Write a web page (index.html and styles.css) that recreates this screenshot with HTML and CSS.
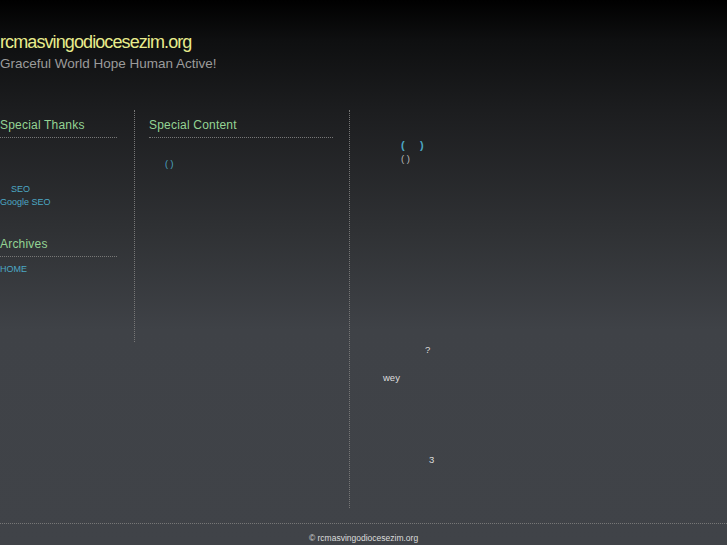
FILE: index.html
```html
<!DOCTYPE html>
<html>
<head>
<meta charset="utf-8">
<title>rcmasvingodiocesezim.org</title>
<link rel="stylesheet" href="styles.css">
</head>
<body>
<div class="page">
  <header class="header">
    <h1 class="site-title">rcmasvingodiocesezim.org</h1>
    <p class="tagline">Graceful World Hope Human Active!</p>
  </header>
  <div class="main">
    <aside class="sidebar">
      <h2 class="widget-title">Special Thanks</h2>
      <ul class="links thanks">
        <li class="indent"><a href="#">SEO</a></li>
        <li><a href="#">Google SEO</a></li>
      </ul>
      <h2 class="widget-title">Archives</h2>
      <ul class="links archives">
        <li><a href="#">HOME</a></li>
      </ul>
    </aside>
    <section class="middle">
      <h2 class="widget-title">Special Content</h2>
      <ul class="links special">
        <li><a href="#">( )</a></li>
      </ul>
    </section>
    <section class="content">
      <h3 class="post-title"><a href="#">(&nbsp;&nbsp;&nbsp;&nbsp;&nbsp;)</a></h3>
      <p class="post-meta">( )</p>
      <p class="line q">?</p>
      <p class="line wey">wey</p>
      <p class="line three">3</p>
    </section>
  </div>
  <footer class="footer">© rcmasvingodiocesezim.org</footer>
</div>
</body>
</html>
```
FILE: styles.css
```css
html, body {
  margin: 0;
  padding: 0;
}
body {
  background: linear-gradient(to bottom, #000 0px, #0e0f10 40px, #1c1d1f 110px, #2f3134 230px, #3f4247 330px, #404348 545px);
  background-color: #404348;
  font-family: "Liberation Sans", Arial, sans-serif;
  color: #ddd;
  min-height: 545px;
}
.page {
  width: 727px;
}
a {
  text-decoration: none;
  color: #4ca7c4;
}
.header {
  padding-top: 32px;
  height: 110px;
  box-sizing: border-box;
}
.site-title {
  margin: 0;
  font-size: 18px;
  font-weight: normal;
  letter-spacing: -0.9px;
  color: #e8ec8c;
  line-height: 20px;
}
.tagline {
  margin: 4px 0 0;
  font-size: 13.5px;
  color: #9b9b9b;
  line-height: 16px;
}
.main {
  display: flex;
  align-items: flex-start;
}
.widget-title {
  margin: 0;
  font-size: 12px;
  font-weight: normal;
  color: #94d494;
  line-height: 15px;
  padding-bottom: 4px;
  border-bottom: 1px dotted #777;
  letter-spacing: 0.2px;
}
.sidebar {
  width: 117px;
  padding-top: 8px;
  margin-right: 17px;
}
.links {
  list-style: none;
  margin: 0;
  padding: 0;
  font-size: 9px;
  line-height: 13px;
}
.links.thanks {
  padding-top: 45px;
  padding-bottom: 28px;
}
.links .indent {
  padding-left: 11px;
}
.links.archives {
  padding-top: 6px;
}
.middle {
  width: 184px;
  height: 224px;
  padding: 8px 16px 0 14px;
  border-left: 1px dotted #777;
}
.links.special {
  padding-top: 20px;
  padding-left: 16px;
}
.content {
  flex: 1;
  height: 398px;
  border-left: 1px dotted #777;
  padding-left: 51px;
  box-sizing: border-box;
  padding-top: 28px;
  font-size: 9.5px;
}
.post-title {
  margin: 0;
  font-size: 11px;
  font-weight: bold;
  line-height: 14px;
}
.post-meta {
  margin: 0;
  color: #bbbbbb;
  line-height: 14px;
}
.line {
  margin: 0;
  line-height: 12px;
  color: #ddd;
}
.q {
  margin-top: 178px;
  padding-left: 24px;
}
.wey {
  margin-top: 16px;
  margin-left: -18px;
}
.three {
  margin-top: 70px;
  padding-left: 28px;
}
.footer {
  margin-top: 15px;
  border-top: 1px dotted #777;
  text-align: center;
  font-size: 8.5px;
  color: #ddd;
  padding-top: 8px;
  line-height: 12px;
}
```
